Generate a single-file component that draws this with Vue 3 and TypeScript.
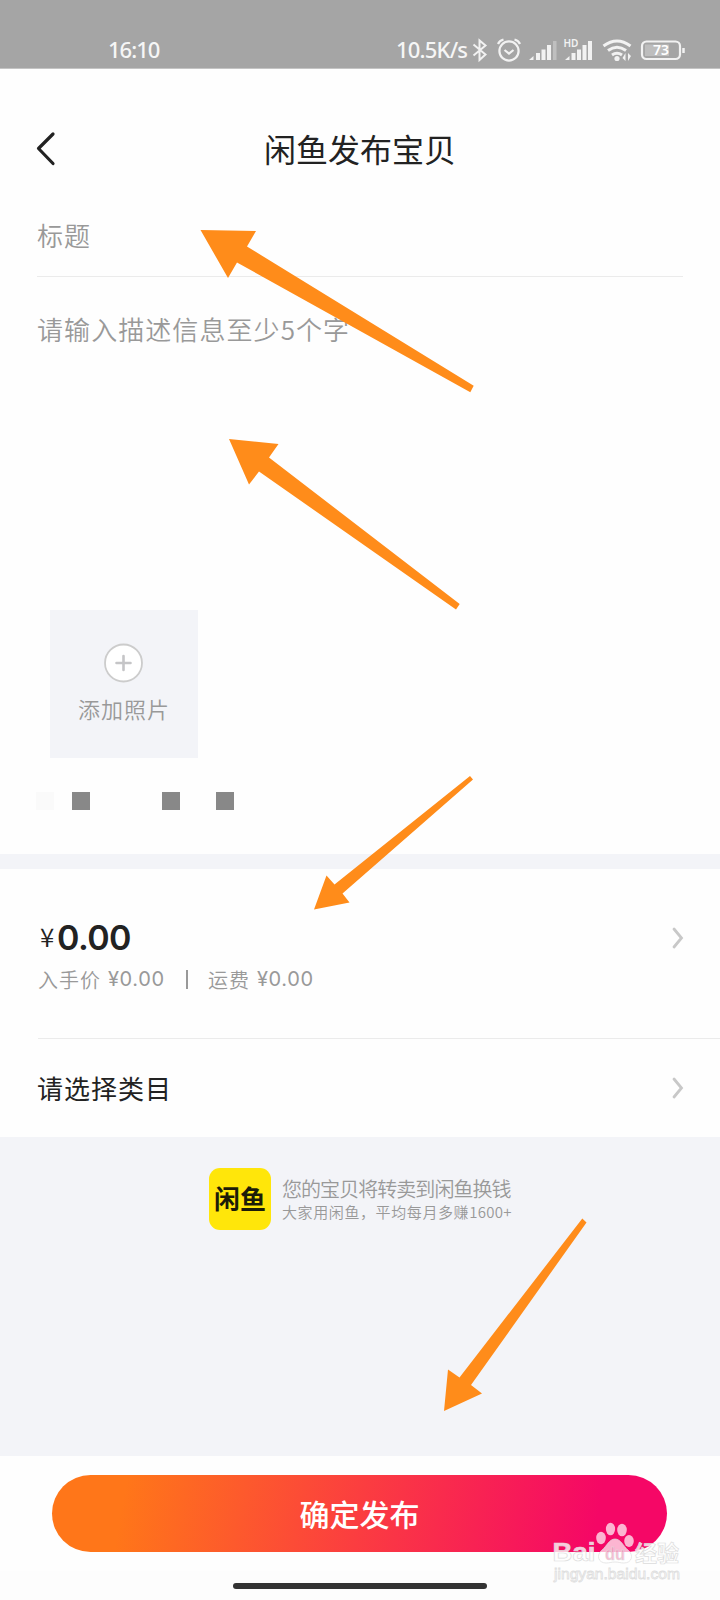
<script setup lang="ts">
interface Arrow {
  id: string
  points: string
}

const arrows: Arrow[] = [
  { id: 'title', points: '200.5,230 256,231 247,246.5 473.7,385.7 470.3,392.2 237,262.5 228,278' },
  { id: 'description', points: '229,439 278.5,444 269,457.5 459.7,604 456,609.5 259,471.5 249,484.5' },
  { id: 'price', points: '314,909.5 326.5,875.5 334.5,884.5 470,776 473,779.5 342.5,893.5 349.5,902.5' },
  { id: 'submit', points: '444,1411 448,1369.5 459.5,1377.5 582.3,1218.5 586.5,1222.5 471,1385 482,1393.5' },
]

const title = '闲鱼发布宝贝'
const swatches: string[] = ['pale', 'first', 'second', 'third']
</script>

<template>
  <main class="screen">
    <header class="status">
      <span class="clock">16:10</span>
      <span class="speed">10.5K/s</span>
      <svg class="status-icons" width="220" height="30" viewBox="0 0 220 30" fill="none" stroke="#f2f2f2">
        <path d="M2.500 9.500 14.500 19.500 8.500 25V5.500l6 5L2.500 20.500" stroke-width="2" />
        <g stroke-width="2.200">
          <circle cx="38" cy="16" r="9.600" />
          <path d="M33.500 15l4.500 3.500 4.500-3.500M27 9q1.500-3.500 5.500-4.500M49 9q-1.500-3.500-5.500-4.500" />
        </g>
        <g fill="#f2f2f2" stroke="none">
          <path d="M58 25l4.500-4v4zM65 18h4v7h-4zM70.500 14.500h4v10.500h-4zM76 10h4v15h-4z" />
          <path d="M82 6h3.500v19H82z" opacity=".35" />
          <path d="M94 25l4.500-4v4zM100.500 18h4v7h-4zM106 14.500h4v10.500h-4zM111.500 10h4v15h-4zM117 6h4v19h-4z" />
          <text x="92.500" y="12" class="hd" textLength="15" lengthAdjust="spacingAndGlyphs">HD</text>
          <circle cx="146" cy="23.500" r="2.600" />
          <path d="M154.500 18v8l-3-3zM157 26v-8l3 3z" />
        </g>
        <path d="M132.500 11q13.500-10 27 0M137 15.500q9-6.500 18 0M141 20q5-3.500 10 0" stroke-width="3" />
        <rect x="171" y="6.500" width="38" height="17.500" rx="4.500" stroke-width="2.200" />
        <path d="M174 9.500h24v11.500h-24z" fill="#bdbdbd" stroke="none" />
        <path d="M212.500 13v5" stroke-width="2.500" />
        <text x="190" y="20" text-anchor="middle" class="charge">73</text>
      </svg>
    </header>

    <nav class="nav">
      <svg class="back" width="24" height="36" viewBox="0 0 24 36">
        <path d="M19 3 4.500 17.500 19 32.500" fill="none" stroke="#222" stroke-width="3.200" stroke-linecap="round" stroke-linejoin="round" />
      </svg>
      <h1>{{ title }}</h1>
    </nav>

    <section class="editor">
      <div class="field name">标题</div>
      <div class="field description">请输入描述信息至少5个字</div>
      <div class="photo">
        <svg width="40" height="40" viewBox="0 0 40 40">
          <circle cx="19.500" cy="20" r="18.500" fill="#fff" stroke="#ccc" stroke-width="1.800" />
          <path d="M19.500 13v14M12.500 20h14" stroke="#c5c5c7" stroke-width="2.600" stroke-linecap="round" />
        </svg>
        <span>添加照片</span>
      </div>
      <div class="swatches">
        <i v-for="s in swatches" :key="s" :class="s"></i>
      </div>
    </section>

    <section class="price">
      <div class="amounts">
        <div class="amount"><span class="yen">¥</span><span class="total">0.00</span></div>
        <div class="detail">
          <span class="label">入手价</span><span class="num">¥0.00</span><i class="bar"></i>
          <span class="label">运费</span><span class="num">¥0.00</span>
        </div>
      </div>
      <svg class="chevron" width="14" height="24" viewBox="0 0 14 24"><path d="M3 3 10.500 12 3 21" /></svg>
    </section>
    <section class="category">
      <span>请选择类目</span>
      <svg class="chevron" width="14" height="24" viewBox="0 0 14 24"><path d="M3 3 10.500 12 3 21" /></svg>
    </section>

    <section class="promo">
      <div class="logo">闲鱼</div>
      <div class="promo-text">
        <div class="headline">您的宝贝将转卖到闲鱼换钱</div>
        <div class="subline">大家用闲鱼，平均每月多赚<span>1600+</span></div>
      </div>
    </section>

    <footer class="footer">
      <button class="submit" type="button">确定发布</button>
      <div class="gesture"><i></i></div>
    </footer>

    <svg class="overlay" width="720" height="1600" viewBox="0 0 720 1600">
      <polygon v-for="arrow in arrows" :key="arrow.id" :points="arrow.points" fill="#ff8c1a" />
      <g class="watermark">
        <g fill="#fff" fill-opacity=".7">
          <ellipse cx="601" cy="1538" rx="4.800" ry="6.200" />
          <ellipse cx="610.500" cy="1529" rx="4.600" ry="6.300" />
          <ellipse cx="622" cy="1530" rx="4.800" ry="6.300" />
          <ellipse cx="629" cy="1541" rx="4.800" ry="6" />
          <path d="M615 1539c6 0 8 7 13 11 6 5 4 13-4 13-4 0-5-1-9-1s-5 1-9 1c-8 0-10-8-4-13 5-4 7-11 13-11z" stroke="#ddd" stroke-width=".7" />
        </g>
        <text x="552.500" y="1561" class="mark" textLength="43" lengthAdjust="spacingAndGlyphs">Bai</text>
        <text x="605" y="1560" class="du" textLength="20" lengthAdjust="spacingAndGlyphs">du</text>
        <text x="635" y="1561" class="mark cjk">经验</text>
        <text x="554" y="1579" class="url" textLength="126" lengthAdjust="spacingAndGlyphs">jingyan.baidu.com</text>
      </g>
    </svg>
  </main>
</template>

<style>
body {
  margin: 0;
  background: #fff;
}
</style>

<style scoped>
.screen {
  position: relative;
  width: 720px;
  height: 1600px;
  overflow: hidden;
  display: flex;
  flex-direction: column;
  background: #fefefe;
  color: #222;
  font-family: "Noto Sans CJK SC", "Noto Sans", sans-serif;
  white-space: nowrap;
}
.editor, .price, .category, .promo, .footer, .status, .nav { flex: none; box-sizing: border-box; }
.status {
  height: 69px;
  padding: 35px 0 0 108px;
  display: flex;
  align-items: flex-start;
  background: #a5a5a5;
  border-bottom: 1px solid #c4c4c4;
  color: #f6f6f6;
  font: 500 22px/29px "Noto Sans", sans-serif;
}
.clock { width: 288px; letter-spacing: -1px; }
.speed { width: 75px; letter-spacing: -.8px; }
.status-icons { flex: none; }
.hd { font: 600 10px "Noto Sans", sans-serif; }
.charge { font: 600 14px "Noto Sans", sans-serif; fill: #fff; stroke: none; }
.nav {
  height: 131px;
  display: flex;
  padding-left: 34px;
}
.back { margin-top: 62px; }
h1 {
  margin: 56px 0 0 206px;
  font-size: 32px;
  line-height: 46px;
  font-weight: 400;
}
.editor {
  height: 654px;
  display: flex;
  flex-direction: column;
}
.field {
  margin-left: 37px;
  font-size: 26px;
  letter-spacing: 1.07px;
  color: #999;
  font-weight: 350;
}
.name {
  width: 646px;
  height: 76px;
  line-height: 70px;
  border-bottom: 1px solid #ebebeb;
}
.description { height: 333px; line-height: 104px; }
.photo {
  flex: none;
  margin-left: 50px;
  width: 148px;
  height: 148px;
  display: flex;
  flex-direction: column;
  align-items: center;
  background: #f3f4f8;
  color: #999;
  font-size: 22px;
  font-weight: 350;
  letter-spacing: 1px;
}
.photo svg { margin: 33px 0 0 -1px; }
.photo span { line-height: 32px; margin-top: 9px; }
.swatches { display: flex; padding: 34px 0 0 36px; }
.swatches i { width: 18px; height: 18px; background: #888; }
.swatches .pale { background: #fafafa; }
.swatches .first { margin-left: 18px; }
.swatches .second { margin-left: 72px; }
.swatches .third { margin-left: 36px; }
.price {
  height: 185px;
  margin-left: 38px;
  position: relative;
  border-bottom: 1px solid #ebebeb;
  display: flex;
  justify-content: space-between;
}
.price::before {
  content: "";
  position: absolute;
  left: -38px;
  top: 0;
  width: 720px;
  height: 15px;
  background: #f3f4f8;
}
.amounts { padding-top: 60px; }
.amount { height: 46px; line-height: 46px; display: flex; }
.yen { width: 17px; margin-left: 2px; font-size: 26px; line-height: 43px; font-weight: 350; }
.total { font: 600 34px/48px Inter, sans-serif; letter-spacing: -.6px; }
.detail {
  display: flex;
  align-items: center;
  height: 38px;
  color: #999;
}
.label { font-size: 20px; font-weight: 350; letter-spacing: 1px; }
.num { width: 56px; margin-left: 7px; font: 400 20px/30px Inter, sans-serif; letter-spacing: .6px; }
.bar { width: 2px; height: 19px; background: #999; margin: 0 20px 0 22px; }
.chevron {
  flex: none;
  margin-right: 35px;
  fill: none;
  stroke: #c8c8c8;
  stroke-width: 2.8;
  stroke-linecap: round;
}
.price .chevron { margin-top: 72px; }
.category {
  height: 98px;
  padding: 0 0 2px 37px;
  display: flex;
  align-items: center;
  justify-content: space-between;
  font-size: 26px;
  letter-spacing: 1px;
}
.category .chevron { margin-top: 2px; }
.promo {
  height: 319px;
  padding: 31px 0 0 209px;
  display: flex;
  background: #f3f4f8;
  color: #999;
}
.logo {
  width: 62px;
  height: 62px;
  border-radius: 11px;
  background: #ffe60a;
  color: #1c1c08;
  font-weight: 700;
  font-size: 26px;
  line-height: 60px;
  text-align: center;
}
.promo-text { margin-left: 11px; font-weight: 350; }
.headline { font-size: 20px; letter-spacing: -.95px; line-height: 28px; margin-top: 7px; }
.subline { font-size: 15px; letter-spacing: .6px; line-height: 17px; }
.subline span { letter-spacing: .3px; }
.footer {
  height: 144px;
  display: flex;
  flex-direction: column;
  align-items: center;
}
.submit {
  flex: none;
  margin: 19px 0 0 -1px;
  width: 615px;
  height: 77px;
  padding: 0;
  border: 0;
  border-radius: 39px;
  background: linear-gradient(100deg, #ff7619 12%, #fb3d40 50%, #f50766 88%);
  color: #fff;
  font: 500 30px/77px "Noto Sans CJK SC", sans-serif;
}
.gesture {
  margin-top: 19px;
  width: 720px;
  height: 29px;
  display: flex;
  justify-content: center;
  background: #fdfdfd;
}
.gesture i {
  width: 254px;
  height: 6px;
  margin-top: 12px;
  border-radius: 3px;
  background: #333;
}
.overlay { position: absolute; left: 0; top: 0; pointer-events: none; }
.mark {
  font: 700 26px "Liberation Sans", "Noto Sans CJK SC", sans-serif;
  fill: #fff;
  fill-opacity: .8;
  stroke: #dcdcdc;
  stroke-width: .7;
}
.mark.cjk { font: 700 22px "Noto Sans CJK SC", sans-serif; }
.du { font: 700 19px "Liberation Sans", sans-serif; fill: #f27aa8; fill-opacity: .5; stroke: #ddd; stroke-width: .6; }
.url { font: 400 15px "Liberation Sans", sans-serif; fill: #fff; stroke: #dedede; stroke-width: .8; }
</style>
